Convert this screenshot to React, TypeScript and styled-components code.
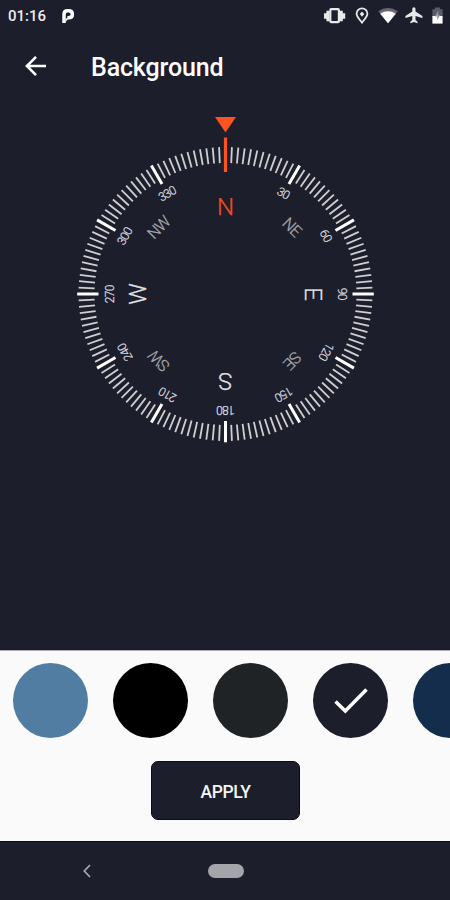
import React from "react";
import styled, { createGlobalStyle } from "styled-components";

const NAVY = "#1c1e2b";
const ORANGE = "#fb5321";

const GlobalStyle = createGlobalStyle`
  * { box-sizing: border-box; }
  body { margin: 0; background: ${NAVY}; font-family: Roboto, "Liberation Sans", sans-serif; }
`;

const Screen = styled.div`
  display: flex;
  flex-direction: column;
  width: 450px;
  height: 900px;
  overflow: hidden;
  background: ${NAVY};
  color: #fff;
`;

const StatusBar = styled.header`
  display: flex;
  align-items: center;
  justify-content: space-between;
  height: 32px;
  padding: 0 6px 0 8px;
`;

const StatusSide = styled.div`
  display: flex;
  align-items: center;
  height: 32px;
`;

const Clock = styled.span`
  width: 53px;
  font-size: 15px;
  font-weight: 500;
  line-height: 32px;
  color: #ececee;
`;

const TopBar = styled.div`
  display: flex;
  align-items: center;
  height: 68px;
  padding-left: 25px;
`;

const BackButton = styled.button`
  display: flex;
  width: 66px;
  padding: 0;
  border: 0;
  background: none;
`;

const Title = styled.h1`
  margin: 3px 0 0;
  font-size: 25px;
  font-weight: 500;
  line-height: 32px;
  letter-spacing: -0.15px;
`;

const DialArea = styled.main`
  flex: 1;
  display: flex;
  justify-content: center;
  align-items: flex-start;
`;

const Label = styled.text<{ $size: number; $spacing?: number }>`
  font-family: Roboto, "Liberation Sans", sans-serif;
  font-size: ${(p) => p.$size}px;
  font-weight: 300;
  letter-spacing: ${(p) => p.$spacing ?? 0}px;
  stroke-width: 0.25px;
  text-anchor: middle;
`;

const Panel = styled.section`
  display: flex;
  flex-direction: column;
  align-items: center;
  height: 191px;
  padding-top: 12px;
  background: #fafafa;
  border-top: 1px solid #aaa9b4;
`;

const Swatches = styled.div`
  display: flex;
  gap: 25px;
  width: 450px;
  height: 75px;
  padding-left: 13px;
  overflow: hidden;
`;

const Swatch = styled.button<{ $color: string }>`
  display: flex;
  flex: 0 0 75px;
  align-items: center;
  justify-content: center;
  height: 75px;
  padding: 0;
  border: 0;
  border-radius: 50%;
  background: ${(p) => p.$color};
`;

const ApplyButton = styled.button`
  width: 149px;
  height: 59px;
  margin: 23px 0 0 1px;
  padding: 2px 0 0;
  border: 1px solid #0b0c16;
  border-radius: 7px;
  background: ${NAVY};
  color: #f4f4f5;
  font: 500 17.5px Roboto, "Liberation Sans", sans-serif;
  letter-spacing: -0.35px;
`;

const NavBar = styled.nav`
  display: grid;
  grid-template-columns: 174px 103px 1fr;
  align-items: center;
  justify-items: center;
  height: 59px;
  border-top: 1px solid #080913;
`;

const HomePill = styled.div`
  width: 36px;
  height: 14px;
  border-radius: 7px;
  background: #a4a4ab;
`;

const ticks = Array.from({ length: 143 }, (_, i) => (i + 1) * 2.5);
const degrees = [30, 60, 90, 120, 150, 180, 210, 240, 270, 300, 330];
const points = [
  { name: "N", angle: 0 },
  { name: "NE", angle: 45 },
  { name: "E", angle: 90 },
  { name: "SE", angle: 135 },
  { name: "S", angle: 180 },
  { name: "SW", angle: 225 },
  { name: "W", angle: 270 },
  { name: "NW", angle: 315 },
];
const swatches = ["#527da3", "#000000", "#202325", NAVY, "#142d4d"];

function Compass() {
  return (
    <svg width="450" height="360" viewBox="-225.5 -194 450 360" role="img" aria-label="Compass">
      {ticks.map((a) => {
        const major = a % 30 === 0;
        return (
          <line
            key={a}
            y1={major ? -148.3 : -147}
            y2={major ? -127 : -131}
            stroke={major ? "#ffffff" : "#cfcfd1"}
            strokeWidth={major ? 3 : 1.8}
            transform={`rotate(${a})`}
          />
        );
      })}
      {degrees.map((a) => (
        <Label
          key={a}
          $size={12}
          $spacing={-0.7}
          x={-0.35}
          y={-112}
          fill="#dedee0"
          stroke="#dedee0"
          transform={`rotate(${a})`}
        >
          {a}
        </Label>
      ))}
      {points.map(({ name, angle }) => {
        const cardinal = name.length === 1;
        const color = name === "N" ? "#ed4e25" : cardinal ? "#e2e2e4" : "#a9a9af";
        return (
          <Label
            key={name}
            $size={cardinal ? 24 : 16}
            $spacing={cardinal ? 0 : -0.8}
            x={cardinal ? 0 : -0.4}
            y={cardinal ? -79.3 : -88.8}
            fill={color}
            stroke={color}
            transform={`rotate(${angle})`}
          >
            {name}
          </Label>
        );
      })}
      <path d="M-10.5-177h21L0-161.5z" fill={ORANGE} />
      <path d="M0-156.5V-122" stroke={ORANGE} strokeWidth="3.2" />
    </svg>
  );
}

export default function App() {
  return (
    <Screen>
      <GlobalStyle />
      <StatusBar>
        <StatusSide>
          <Clock>01:16</Clock>
          <svg width="14" height="16" viewBox="0 0 14 16" fill="none">
            <path d="M3 15V6.4Q3 2.7 6.5 2.7H7.6Q11.4 2.7 11.4 6.2T7.6 9.7H6.4" stroke="#fff" strokeWidth="3.5" />
            <path d="M4.6 10.2h3.2L4.6 14z" fill="#fff" />
          </svg>
        </StatusSide>
        <svg width="122" height="20" viewBox="322 6 122 20" fill="#e9e9ec">
          <rect x="330.3" y="9.2" width="8.6" height="13" rx="1" fill="none" stroke="#e9e9ec" strokeWidth="2.2" />
          <path d="M326.4 10.8h3v10.4h-3zM339.8 10.8h3v10.4h-3zM324 13.2h2.6v5.6H324zM342.6 13.2h2.6v5.6h-2.6z" />
          <path d="M362 22.6c-2.7-3.4-5.4-6-5.4-8.8a5.4 5.4 0 0 1 10.8 0c0 2.8-2.7 5.4-5.4 8.8z" fill="none" stroke="#e9e9ec" strokeWidth="1.8" />
          <path d="M362 11.5l2.3 2.5-2.3 2.8-2.3-2.8z" />
          <path d="M378.3 11.2Q388 4.8 397.7 11.2L388 23.3z" fill="#686974" />
          <path d="M380.2 13.7Q388 9 395.8 13.7L388 23.3z" fill="#fff" />
          <path d="M422.4 18v-2l-6.9-4.4V8.8a1.6 1.6 0 0 0-3.2 0v2.8l-6.9 4.4v2l6.9-2v4.1l-2 1.6v1.5l3.6-1.1 3.6 1.1v-1.5l-2-1.6V16z" />
          <path d="M435 7.4h5v1.8h2.6v7.3h-10.2V9.2h2.6z" fill="#5b5c67" />
          <path d="M432.4 16h10.2v7.6h-10.2z" fill="#fff" />
          <path d="M438.4 10.5l-3.4 6h2.2v3.8l2.9-5h-1.7z" fill="#9c9ca3" />
        </svg>
      </StatusBar>
      <TopBar>
        <BackButton aria-label="Back">
          <svg width="22" height="22" viewBox="0 0 22 22" fill="none" stroke="#fff" strokeWidth="2.6">
            <path d="M21 11H3M11 1.8L1.9 11l9.1 9.2" />
          </svg>
        </BackButton>
        <Title>Background</Title>
      </TopBar>
      <DialArea>
        <Compass />
      </DialArea>
      <Panel>
        <Swatches>
          {swatches.map((color) => (
            <Swatch key={color} $color={color} aria-label={color}>
              {color === NAVY && (
                <svg width="36" height="28" viewBox="0 0 36 28" fill="none" stroke="#fff" strokeWidth="3.5">
                  <path d="M2.5 14.5l9.8 9.5L33.5 2.5" />
                </svg>
              )}
            </Swatch>
          ))}
        </Swatches>
        <ApplyButton>APPLY</ApplyButton>
      </Panel>
      <NavBar>
        <svg width="8" height="14" viewBox="0 0 8 14" fill="none" stroke="#a4a4ab" strokeWidth="1.8">
          <path d="M7 1L1.3 7 7 13" />
        </svg>
        <HomePill />
      </NavBar>
    </Screen>
  );
}
